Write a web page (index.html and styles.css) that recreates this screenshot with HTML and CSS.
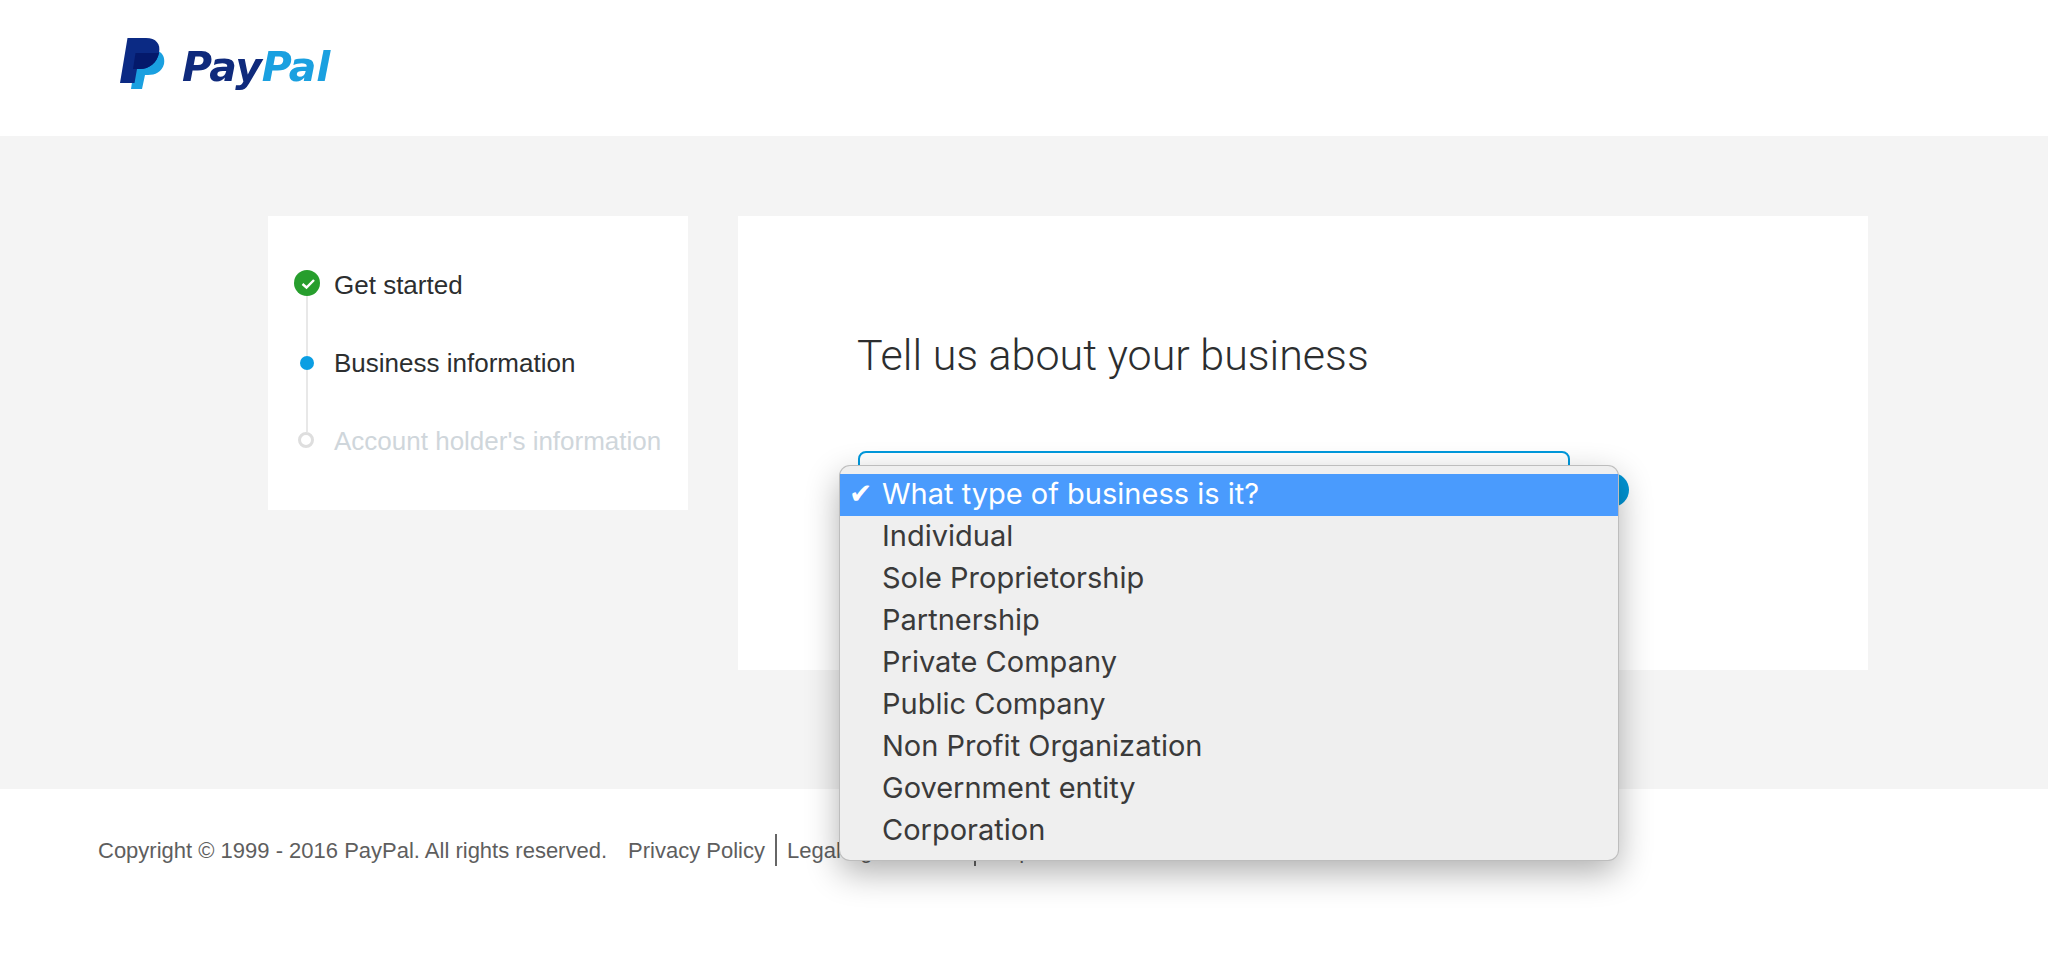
FILE: index.html
```html
<!DOCTYPE html>
<html lang="en">
<head>
    <meta charset="UTF-8">
    <meta name="viewport" content="width=device-width, initial-scale=1.0">
    <title>PayPal - Tell us about your business</title>
    <link rel="stylesheet" href="styles.css">
</head>
<body>
    <header class="header">
        <div class="logo">
            <svg class="logo-mark" width="46" height="52" viewBox="0 0 46 52">
                <path fill="#1aa0e0" d="M38 13C43 15 45 20 44 26C42 34 35 37 28 37H25L22 51H11L14 31Z"/>
                <path fill="#0b2a84" d="M0 45L7.5 0H26C36 0 41 6 39 15C37 25 29 31 20 31H17L14.5 45Z"/>
                <path fill="#04196b" d="M15.5 15H39C37 25 29 31 20 31H13Z"/>
            </svg>
            <span class="logo-text">Pay<span class="logo-pal">Pal</span></span>
        </div>
    </header>

    <main class="content">
        <!-- Steps -->
        <div class="steps">
            <div class="step step-done">
                <span class="step-icon">
                    <svg width="26" height="26" viewBox="0 0 26 26">
                        <circle cx="13" cy="13" r="13" fill="#279e2d"/>
                        <path d="M8.5 14L12.5 17.5L20 10" fill="none" stroke="#fff" stroke-width="2.4"/>
                    </svg>
                </span>
                Get started
            </div>
            <div class="step step-current">
                <span class="step-icon"><span class="dot"></span></span>
                Business information
            </div>
            <div class="step step-todo">
                <span class="step-icon"><span class="ring"></span></span>
                Account holder's information
            </div>
        </div>

        <div class="card">
            <h1 class="title">Tell us about your business</h1>
            <div class="select-row">
                <div class="select-box"></div>
                <span class="help-dot"></span>
            </div>
        </div>
    </main>

    <footer class="footer">
        <span class="copyright">Copyright © 1999 - 2016 PayPal. All rights reserved.</span>
        <a class="footer-link" href="#">Privacy Policy</a>
        <a class="footer-link" href="#">Legal Agreements</a>
        <a class="footer-link" href="#">Help</a>
    </footer>

    <!-- Open select menu -->
    <ul class="menu">
        <li class="menu-item selected">What type of business is it?</li>
        <li class="menu-item">Individual</li>
        <li class="menu-item">Sole Proprietorship</li>
        <li class="menu-item">Partnership</li>
        <li class="menu-item">Private Company</li>
        <li class="menu-item">Public Company</li>
        <li class="menu-item">Non Profit Organization</li>
        <li class="menu-item">Government entity</li>
        <li class="menu-item">Corporation</li>
    </ul>
</body>
</html>
```

FILE: styles.css
```css
body {
    font-family: "Liberation Sans", Arial, sans-serif;
    background-color: white;
    margin: 0;
    height: 956px;
    overflow: hidden;
    position: relative;
}
.header {
    height: 136px;
    padding: 38px 0 0 120px;
    box-sizing: border-box;
}
.logo {
    display: flex;
    align-items: flex-start;
    gap: 16px;
    filter: blur(0.5px);
}
.logo-text {
    font-family: "DejaVu Sans", sans-serif;
    font-size: 41px;
    line-height: 59px;
    font-weight: bold;
    font-style: italic;
    color: #0f2a7c;
    letter-spacing: -0.3px;
}
.logo-pal {
    color: #1aa0e0;
}
.content {
    height: 653px;
    box-sizing: border-box;
    background-color: #f4f4f4;
    padding: 80px 0 0 268px;
    display: flex;
    align-items: flex-start;
    gap: 50px;
}
.steps {
    width: 420px;
    height: 294px;
    box-sizing: border-box;
    background-color: white;
    padding: 30px 0 0 26px;
}
.step {
    height: 78px;
    display: flex;
    align-items: center;
    gap: 14px;
    font-size: 26px;
    color: #2c2e2f;
    position: relative;
}
.step-icon {
    width: 26px;
    height: 26px;
    display: flex;
    align-items: center;
    justify-content: center;
    flex: none;
}
.step-done .step-icon {
    margin-bottom: 4px;
}
.step-done::after, .step-current::after {
    content: "";
    position: absolute;
    left: 12px;
    top: 50px;
    width: 2px;
    height: 60px;
    background-color: #e8e8e8;
}
.step-current::after {
    top: 46px;
    height: 62px;
}
.step-todo {
    color: #cfd6db;
}
.dot {
    width: 14px;
    height: 14px;
    border-radius: 50%;
    background-color: #0b9ee3;
}
.ring {
    width: 10px;
    height: 10px;
    margin: 0 2px 2px 0;
    border: 3px solid #dedede;
    border-radius: 50%;
    background-color: white;
    position: relative;
    z-index: 1;
}
.card {
    width: 1130px;
    height: 454px;
    box-sizing: border-box;
    background-color: white;
    padding: 113px 0 0 120px;
}
.title {
    font-family: Roboto, sans-serif;
    font-size: 43px;
    font-weight: 300;
    color: #2c2e2f;
    margin: 0 0 70px -1px;
    line-height: 52px;
}
.select-row {
    position: relative;
}
.select-box {
    width: 712px;
    height: 80px;
    box-sizing: border-box;
    border: 2px solid #0099dd;
    border-radius: 8px;
}
.help-dot {
    position: absolute;
    left: 737px;
    top: 22px;
    width: 34px;
    height: 34px;
    border-radius: 50%;
    background-color: #0095d6;
}
.footer {
    padding: 45px 0 0 98px;
    display: flex;
    align-items: center;
    font-size: 22px;
    color: #5e5e5e;
}
.copyright {
    margin: 2px 11px 0 0;
}
.footer-link {
    color: #5e5e5e;
    text-decoration: none;
    padding: 5px 10px 3px;
    line-height: 24px;
    border-left: 2px solid #666;
}
.copyright + .footer-link {
    border-left: none;
}
.menu {
    position: absolute;
    left: 840px;
    top: 466px;
    width: 778px;
    height: 394px;
    box-sizing: border-box;
    margin: 0;
    padding: 8px 0 0;
    list-style: none;
    background-color: #efefef;
    border-radius: 10px;
    box-shadow: 0 0 0 1px #bdbdbd, 0 12px 34px rgba(0, 0, 0, 0.32);
    font-family: Inter, sans-serif;
    font-size: 29px;
    color: #3a3a3a;
}
.menu-item {
    height: 42px;
    line-height: 40px;
    padding-left: 42px;
}
.selected {
    background-color: #4a9bfd;
    color: white;
    position: relative;
}
.selected::before {
    content: "✔";
    position: absolute;
    left: 9px;
    font-family: "DejaVu Sans", sans-serif;
    font-size: 28px;
}
```
